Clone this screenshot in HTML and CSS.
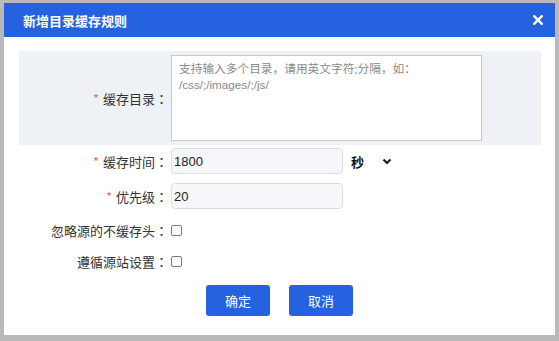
FILE: index.html
```html
<!DOCTYPE html>
<html>
  <head>
    <meta charset="utf-8">
    <title>新增目录缓存规则</title>
    <link rel="stylesheet" href="styles.css">
  </head>
  <body>
    <div class="dialog">
      <div class="dialog__header">
        <span class="dialog__title">新增目录缓存规则</span>
        <button class="dialog__close" title="关闭">
          <svg width="10" height="10" viewBox="0 0 10 10">
            <path d="M1.2 1.2 L8.8 8.8 M8.8 1.2 L1.2 8.8" stroke="#ffffff" stroke-width="2.4" stroke-linecap="square"/>
          </svg>
        </button>
      </div>

      <form class="dialog__body">
        <div class="row row--dirs">
          <label class="row__label"><span class="req">*</span>缓存目录<span class="colon">：</span></label>
          <textarea class="dirs" placeholder="支持输入多个目录，请用英文字符;分隔，如：&#10;/css/;/images/;/js/"></textarea>
        </div>

        <div class="row row--time">
          <label class="row__label"><span class="req">*</span>缓存时间<span class="colon">：</span></label>
          <input type="text" class="field" value="1800">
          <span class="unit">秒</span>
          <svg class="chevron" width="10" height="7" viewBox="0 0 10 7">
            <path d="M1.5 1.5 L5 5 L8.5 1.5" fill="none" stroke="#1c1c2b" stroke-width="2.2"/>
          </svg>
        </div>

        <div class="row row--prio">
          <label class="row__label"><span class="req">*</span>优先级<span class="colon">：</span></label>
          <input type="text" class="field" value="20">
        </div>

        <div class="row row--check">
          <label class="row__label">忽略源的不缓存头<span class="colon">：</span></label>
          <input type="checkbox" class="check">
        </div>

        <div class="row row--check2">
          <label class="row__label">遵循源站设置<span class="colon">：</span></label>
          <input type="checkbox" class="check">
        </div>

        <div class="actions">
          <button type="button" class="btn">确定</button>
          <button type="button" class="btn">取消</button>
        </div>
      </form>
    </div>
  </body>
</html>
```

FILE: styles.css
```css
/* page */
body {
  margin: 0;
  padding: 3px 4px 6px 4px;
  background-color: #b9b9b9;
  font-family: "Liberation Sans", "Noto Sans CJK SC", sans-serif;
  font-size: 13px;
  color: #333333;
}

/* dialog box */
.dialog {
  width: 551px;
  height: 332px;
  background-color: #ffffff;
}

.dialog__header {
  height: 34px;
  padding: 0 12px 0 19px;
  display: flex;
  align-items: center;
  justify-content: space-between;
  background-color: #2462e0;
}

.dialog__title {
  color: #ffffff;
  font-size: 13px;
  font-weight: bold;
  font-family: "Noto Sans CJK SC", sans-serif;
}

.dialog__close {
  border: none;
  background: none;
  padding: 0;
  width: 10px;
  height: 10px;
  display: block;
  cursor: pointer;
}

.dialog__close svg {
  display: block;
}

/* form rows */
.dialog__body {
  margin: 0;
  padding: 14px 14px 0 15px;
}

.row {
  display: flex;
  align-items: center;
}

.row__label {
  width: 149px;
  margin-right: 3px;
  text-align: right;
  flex-shrink: 0;
  font-family: "Noto Sans CJK SC", sans-serif;
  font-size: 13px;
  color: #333333;
}

.colon {
  font-family: "Noto Sans CJK JP", sans-serif;
}

.req {
  color: #f56c6c;
  margin-right: 4px;
}

.row--dirs {
  height: 94px;
  background-color: #eef1f6;
}

.dirs {
  width: 311px;
  height: 86px;
  box-sizing: border-box;
  margin: 0;
  padding: 5px 7px;
  border: 1px solid #c8c8c8;
  resize: none;
  font-family: "Liberation Sans", "Noto Sans CJK SC", sans-serif;
  font-size: 11.7px;
  line-height: 16px;
  color: #333333;
}

.dirs::placeholder {
  color: #8a8a8a;
}

.row--time {
  margin-top: 3px;
  height: 26px;
}

.row--prio {
  margin-top: 9px;
  height: 26px;
}

.field {
  width: 172px;
  height: 26px;
  box-sizing: border-box;
  margin: 0;
  padding: 0 2px;
  border: 1px solid #dcdfe6;
  border-radius: 4px;
  background-color: #f5f7fa;
  font-family: "Liberation Sans", sans-serif;
  font-size: 13px;
  color: #222222;
}

.unit {
  margin-left: 8px;
  font-family: "Noto Sans CJK SC", sans-serif;
  font-weight: bold;
  font-size: 13px;
  color: #111111;
}

.chevron {
  margin-left: 18px;
  margin-top: 1px;
}

.row--check {
  margin-top: 8px;
  height: 26px;
}

.row--check2 {
  margin-top: 5px;
  height: 26px;
}

.check {
  appearance: none;
  width: 11px;
  height: 11px;
  margin: 0;
  border: 1px solid #7a7a7a;
  border-radius: 2px;
  background-color: #ffffff;
}

/* buttons */
.actions {
  margin-top: 11px;
  display: flex;
  justify-content: center;
  gap: 19px;
  padding-right: 1px;
}

.btn {
  width: 64px;
  height: 31px;
  border: none;
  border-radius: 3px;
  background-color: #2462e0;
  color: #ffffff;
  font-family: "Noto Sans CJK SC", sans-serif;
  font-size: 13px;
  cursor: pointer;
}
```
